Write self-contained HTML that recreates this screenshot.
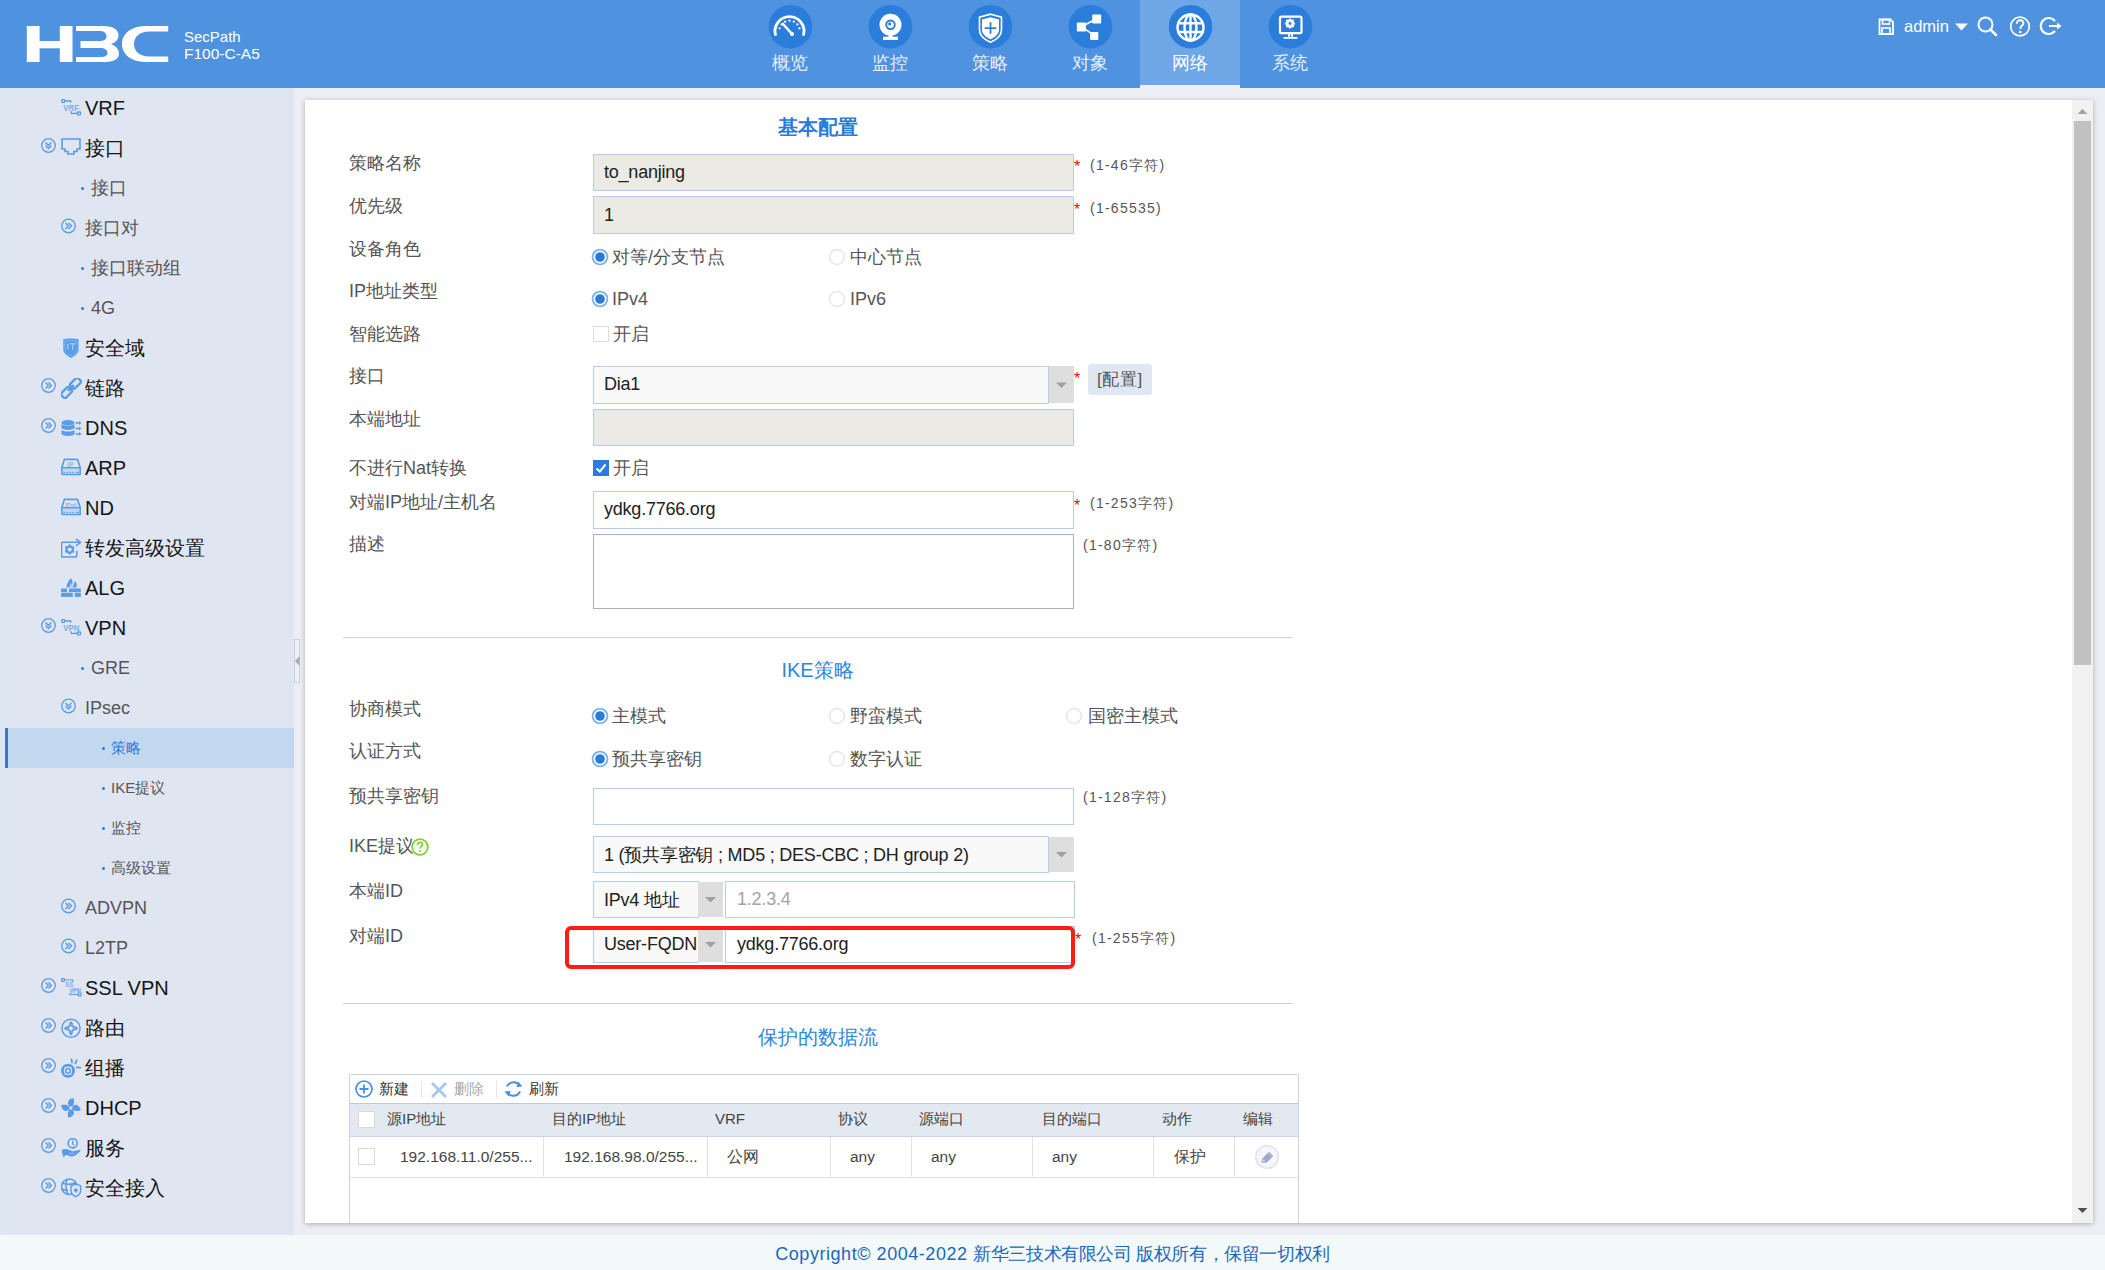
<!DOCTYPE html><html><head><meta charset="utf-8"><style>
html,body{margin:0;padding:0}
body{width:2105px;height:1270px;overflow:hidden;position:relative;background:#eceef3;font-family:'Liberation Sans',sans-serif}
.t{position:absolute;white-space:nowrap}
.r{position:absolute;box-sizing:border-box}
</style></head><body>
<div class="r" style="left:0px;top:0px;width:2105px;height:88px;background:#4f92df"></div>
<div class="r" style="left:1140px;top:0px;width:100px;height:85px;background:#6fa7e6"></div>
<div class="r" style="left:1140px;top:85px;width:100px;height:3px;background:#eaf2fd"></div>
<svg class="r" style="left:20px;top:20px;" width="160" height="50" viewBox="0 0 160 50"><g fill="#fff" transform="translate(-20,-20)">
<rect x="26.8" y="26" width="12.8" height="36"/><rect x="59.8" y="26" width="12.7" height="36"/><rect x="39" y="41" width="21.5" height="7.3"/>
<path d="M76,26 L103,26 C114,26 118.5,30 118.5,35.5 C118.5,39.5 115.5,42.5 111,44.3 C116,46 119,49.5 119,53.5 C119,59.5 113.5,62 103,62 L76,62 L76,57 L100,57 C105.5,57 107.5,55.5 107.5,53 C107.5,50 105,48 100,48 L80.5,48 L80.5,41 L99,41 C104,41 106.5,39.5 106.5,36.5 C106.5,33 104,31 99,31 L76,31 Z"/>
<path d="M168.2,26 L147,26 C131,26 122,33.5 122,44 C122,54.5 131,62 147,62 L168.2,62 L168.2,56.5 L149,56.5 C140,56.5 134,51.5 134,44 C134,36.5 140,31.5 149,31.5 L168.2,31.5 Z"/>
</g></svg>
<div class="t" style="left:184px;top:29px;font-size:15px;line-height:15px;color:#fff;font-weight:normal;">SecPath</div>
<div class="t" style="left:184px;top:45.5px;font-size:15.5px;line-height:15px;color:#fff;font-weight:normal;">F100-C-A5</div>
<svg class="r" style="left:740px;top:0px;" width="100" height="52" viewBox="0 0 100 52"><circle cx="50.5" cy="26.7" r="21.8" fill="#2a7ddb"/><g transform="translate(50.5,26.7)"><g transform="translate(-1,4.3)"><path d="M-13.8,4.6 A14.5,14.5 0 1 1 13.8,4.6" fill="none" stroke="#fff" stroke-width="2.8"/>
<g fill="#fff"><circle cx="-9.95" cy="-2.67" r="1.15"/><circle cx="-7.89" cy="-6.62" r="1.15"/><circle cx="-4.35" cy="-9.33" r="1.15"/><circle cx="0.00" cy="-10.30" r="1.15"/><circle cx="4.35" cy="-9.33" r="1.15"/><circle cx="7.89" cy="-6.62" r="1.15"/><circle cx="9.95" cy="-2.67" r="1.15"/></g>
<path d="M-6.5,-7 L2.5,3" stroke="#fff" stroke-width="2.6" stroke-linecap="round"/><circle cx="2.5" cy="3" r="2" fill="#fff"/></g></g></svg>
<div class="t" style="left:740px;top:53px;font-size:18px;line-height:20px;color:#e3eefb;font-weight:normal;"><div style="width:100px;text-align:center">概览</div></div>
<svg class="r" style="left:840px;top:0px;" width="100" height="52" viewBox="0 0 100 52"><circle cx="50.5" cy="26.7" r="21.8" fill="#2a7ddb"/><g transform="translate(50.5,26.7)"><circle cx="0" cy="-2" r="11" fill="#fff"/><circle cx="0" cy="-2" r="5.2" fill="#2a7ddb"/><circle cx="0" cy="-2" r="3.3" fill="#fff"/><circle cx="-0.8" cy="-2.8" r="1.6" fill="#2a7ddb"/>
<rect x="-2" y="8" width="4" height="4" fill="#fff"/><rect x="-7.5" y="10" width="15" height="3.2" fill="#fff"/></g></svg>
<div class="t" style="left:840px;top:53px;font-size:18px;line-height:20px;color:#e3eefb;font-weight:normal;"><div style="width:100px;text-align:center">监控</div></div>
<svg class="r" style="left:940px;top:0px;" width="100" height="52" viewBox="0 0 100 52"><circle cx="50.5" cy="26.7" r="21.8" fill="#2a7ddb"/><g transform="translate(50.5,26.7)"><path d="M0,-12.5 L11,-9.5 L11,3 C11,9 6,13 0,15.5 C-6,13 -11,9 -11,3 L-11,-9.5 Z" fill="none" stroke="#fff" stroke-width="1.6"/>
<path d="M0,-9.5 L8.5,-7.3 L8.5,2.8 C8.5,7.5 4.5,10.5 0,12.5 C-4.5,10.5 -8.5,7.5 -8.5,2.8 L-8.5,-7.3 Z" fill="#fff"/>
<path d="M0,-4.5 V7 M-5.8,1.5 H5.8" stroke="#2a7ddb" stroke-width="1.8"/></g></svg>
<div class="t" style="left:940px;top:53px;font-size:18px;line-height:20px;color:#e3eefb;font-weight:normal;"><div style="width:100px;text-align:center">策略</div></div>
<svg class="r" style="left:1040px;top:0px;" width="100" height="52" viewBox="0 0 100 52"><circle cx="50.5" cy="26.7" r="21.8" fill="#2a7ddb"/><g transform="translate(50.5,26.7)"><path d="M-9,0 L6,-8 M-9,0 L4,9" stroke="#fff" stroke-width="1.6"/>
<rect x="1.7" y="-12.2" width="9" height="9" rx="1" fill="#fff"/><rect x="-13.7" y="-4.2" width="9.2" height="9" rx="1" fill="#fff"/><rect x="-0.4" y="5.2" width="8.2" height="8" rx="1" fill="#fff"/></g></svg>
<div class="t" style="left:1040px;top:53px;font-size:18px;line-height:20px;color:#e3eefb;font-weight:normal;"><div style="width:100px;text-align:center">对象</div></div>
<svg class="r" style="left:1140px;top:0px;" width="100" height="52" viewBox="0 0 100 52"><circle cx="50.5" cy="26.7" r="21.8" fill="#2a7ddb"/><g transform="translate(50.5,26.7)"><g fill="none" stroke="#fff" stroke-width="2.4"><circle cx="0" cy="0.8" r="13"/><ellipse cx="0" cy="0.8" rx="6" ry="13"/><path d="M-13,-3.5 H13 M-13,5.3 H13 M0,-12.2 V13.8"/></g></g></svg>
<div class="t" style="left:1140px;top:53px;font-size:18px;line-height:20px;color:#ffffff;font-weight:normal;"><div style="width:100px;text-align:center">网络</div></div>
<svg class="r" style="left:1240px;top:0px;" width="100" height="52" viewBox="0 0 100 52"><circle cx="50.5" cy="26.7" r="21.8" fill="#2a7ddb"/><g transform="translate(50.5,26.7)"><rect x="-10.5" y="-10" width="21.5" height="16.5" rx="1.5" fill="none" stroke="#fff" stroke-width="2.2"/>
<path d="M-1.5,6.5 V10 M1.5,6.5 V10" stroke="#fff" stroke-width="2"/><rect x="-7" y="10.3" width="14" height="1.8" fill="#fff"/>
<g transform="translate(-0.5,-3.2)"><circle r="3.2" fill="none" stroke="#fff" stroke-width="2.2"/><g stroke="#fff" stroke-width="1.8"><path d="M0,-5 V5 M-5,0 H5 M-3.6,-3.6 L3.6,3.6 M-3.6,3.6 L3.6,-3.6"/></g><circle r="1.4" fill="#2a7ddb"/></g></g></svg>
<div class="t" style="left:1240px;top:53px;font-size:18px;line-height:20px;color:#e3eefb;font-weight:normal;"><div style="width:100px;text-align:center">系统</div></div>
<svg class="r" style="left:1876px;top:16px;" width="20" height="21" viewBox="0 0 20 21"><path d="M3.5,3.5 H14.5 L17,6 V18 H3.5 Z" fill="none" stroke="#fff" stroke-width="1.8"/><rect x="6.5" y="3.5" width="7" height="4.5" fill="none" stroke="#fff" stroke-width="1.6"/><rect x="6" y="12" width="8" height="6" fill="none" stroke="#fff" stroke-width="1.6"/></svg>
<div class="t" style="left:1904px;top:17px;font-size:16.5px;line-height:18px;color:#fff;font-weight:normal;">admin</div>
<svg class="r" style="left:1954px;top:22px;" width="16" height="10" viewBox="0 0 16 10"><path d="M1,1.5 H14 L7.5,8.5 Z" fill="#fff"/></svg>
<svg class="r" style="left:1975px;top:14px;" width="26" height="24" viewBox="0 0 26 24"><circle cx="10.5" cy="10.5" r="7" fill="none" stroke="#fff" stroke-width="2"/><path d="M15.5,15.5 L21,21" stroke="#fff" stroke-width="2.6" stroke-linecap="round"/></svg>
<svg class="r" style="left:2008px;top:14px;" width="26" height="26" viewBox="0 0 26 26"><circle cx="12" cy="12.5" r="9.3" fill="none" stroke="#fff" stroke-width="1.7"/><path d="M8.8,9.8 C8.8,7.4 10.3,6.2 12.1,6.2 C14,6.2 15.4,7.5 15.4,9.3 C15.4,11.6 12.4,12 12.4,14.3 V15" fill="none" stroke="#fff" stroke-width="1.9"/><circle cx="12.3" cy="18" r="1.3" fill="#fff"/></svg>
<svg class="r" style="left:2038px;top:14px;" width="28" height="24" viewBox="0 0 28 24"><path d="M17,7 A8,8 0 1 0 17,17" fill="none" stroke="#fff" stroke-width="2.2"/><path d="M11,12 H20" stroke="#fff" stroke-width="2"/><path d="M19,8.5 L23.5,12 L19,15.5 Z" fill="#fff"/></svg>
<div class="r" style="left:0px;top:88px;width:294px;height:1147px;background:#dfe5f1"></div>
<div class="r" style="left:0px;top:88px;width:5px;height:1147px;background:#dde7f5"></div>
<div class="r" style="left:5px;top:728px;width:289px;height:40px;background:#c2d8ef"></div>
<div class="r" style="left:5px;top:728px;width:3px;height:40px;background:#2a7bdc"></div>
<div class="r" style="left:294px;top:639px;width:6px;height:44px;border:1px solid #c9d1ea;background:#eef0f5"></div>
<svg class="r" style="left:294px;top:654px;" width="6" height="14" viewBox="0 0 6 14"><path d="M5.5,2 L1,7 L5.5,12 Z" fill="#a8a8ac"/></svg>
<svg class="r" style="left:61px;top:98px;" width="21" height="21" viewBox="0 0 21 21"><g fill="none" stroke="#5a9be6" stroke-width="1.3"><rect x="0.7" y="1.7" width="2.9" height="2.7" rx="0.6"/><path d="M3.6,3 H9.7 V4.8"/><rect x="16.5" y="14" width="3" height="2.8" rx="0.6"/><path d="M10.3,13.2 V15.4 H16.5"/></g><text x="2.3" y="12.6" font-size="8.6" font-family="Liberation Sans" font-weight="bold" fill="#7eaee9" textLength="15.6" lengthAdjust="spacingAndGlyphs">VRF</text></svg>
<div class="t" style="left:85px;top:88px;font-size:20px;line-height:40px;color:#151515;font-weight:normal;">VRF</div>
<svg class="r" style="left:40px;top:136px;" width="18" height="18" viewBox="0 0 18 18"><circle cx="8.5" cy="9.5" r="6.8" fill="none" stroke="#5a9be6" stroke-width="1.3"/><path d="M5.5,6.5 L8.5,9.5 L11.5,6.5 M5.5,9.5 L8.5,12.5 L11.5,9.5" fill="none" stroke="#5a9be6" stroke-width="1.4"/></svg>
<svg class="r" style="left:61px;top:138px;" width="21" height="21" viewBox="0 0 21 21"><path d="M1,1 H19 V11 H16 V13.5 H13 V16 H7 V13.5 H4 V11 H1 Z" fill="none" stroke="#5a9be6" stroke-width="1.6"/></svg>
<div class="t" style="left:85px;top:128px;font-size:20px;line-height:40px;color:#151515;font-weight:normal;">接口</div>
<div class="r" style="left:81px;top:186.5px;width:3px;height:3px;background:#2a7ad8;border-radius:50%"></div>
<div class="t" style="left:91px;top:168px;font-size:18px;line-height:40px;color:#555;font-weight:normal;">接口</div>
<svg class="r" style="left:60px;top:216px;" width="18" height="18" viewBox="0 0 18 18"><circle cx="8.5" cy="10" r="6.8" fill="none" stroke="#5a9be6" stroke-width="1.3"/><path d="M5.5,7 L8.5,10 L5.5,13 M8.5,7 L11.5,10 L8.5,13" fill="none" stroke="#5a9be6" stroke-width="1.4"/></svg>
<div class="t" style="left:85px;top:208px;font-size:18px;line-height:40px;color:#555;font-weight:normal;">接口对</div>
<div class="r" style="left:81px;top:266.5px;width:3px;height:3px;background:#2a7ad8;border-radius:50%"></div>
<div class="t" style="left:91px;top:248px;font-size:18px;line-height:40px;color:#555;font-weight:normal;">接口联动组</div>
<div class="r" style="left:81px;top:306.5px;width:3px;height:3px;background:#2a7ad8;border-radius:50%"></div>
<div class="t" style="left:91px;top:288px;font-size:18px;line-height:40px;color:#555;font-weight:normal;">4G</div>
<svg class="r" style="left:61px;top:338px;" width="21" height="21" viewBox="0 0 21 21"><path d="M2.3,1.3 C6,0.1 13.6,0.1 17.6,1.3 V11.6 C17.6,15.4 13.5,18.3 10,19.9 C6.5,18.3 2.3,15.4 2.3,11.6 Z" fill="#5a9be6"/><path d="M4,3 C7,2.2 13,2.2 16,3 V11.4 C16,14.3 12.8,16.7 10,18 C7.2,16.7 4,14.3 4,11.4 Z" fill="none" stroke="#8fbcf0" stroke-width="0.7"/><path d="M6.8,5.5 V11.5 M9,5.8 H14.5 M11.7,5.8 V12" stroke="#9cc6f2" stroke-width="1.4"/></svg>
<div class="t" style="left:85px;top:328px;font-size:20px;line-height:40px;color:#151515;font-weight:normal;">安全域</div>
<svg class="r" style="left:40px;top:376px;" width="18" height="18" viewBox="0 0 18 18"><circle cx="8.5" cy="9.5" r="6.8" fill="none" stroke="#5a9be6" stroke-width="1.3"/><path d="M5.5,6.5 L8.5,9.5 L5.5,12.5 M8.5,6.5 L11.5,9.5 L8.5,12.5" fill="none" stroke="#5a9be6" stroke-width="1.4"/></svg>
<svg class="r" style="left:61px;top:378px;" width="21" height="21" viewBox="0 0 21 21"><g fill="none" stroke="#5a9be6" stroke-width="2.3"><rect x="9" y="2" width="11" height="6.5" rx="1.8" transform="rotate(-45 14.5 5.3)"/><rect x="0" y="11.3" width="11" height="6.5" rx="1.8" transform="rotate(-45 5.5 14.5)"/></g><path d="M7.2,12.8 L12.8,7.2" stroke="#5a9be6" stroke-width="2.6"/></svg>
<div class="t" style="left:85px;top:368px;font-size:20px;line-height:40px;color:#151515;font-weight:normal;">链路</div>
<svg class="r" style="left:40px;top:416px;" width="18" height="18" viewBox="0 0 18 18"><circle cx="8.5" cy="9.5" r="6.8" fill="none" stroke="#5a9be6" stroke-width="1.3"/><path d="M5.5,6.5 L8.5,9.5 L5.5,12.5 M8.5,6.5 L11.5,9.5 L8.5,12.5" fill="none" stroke="#5a9be6" stroke-width="1.4"/></svg>
<svg class="r" style="left:61px;top:418px;" width="21" height="21" viewBox="0 0 21 21"><g transform="translate(0,1.5)"><g fill="#5a9be6"><ellipse cx="7" cy="3.2" rx="6.5" ry="2.8"/><path d="M0.5,4.6 C1.5,7 12.5,7 13.5,4.6 V8.6 C12.5,11 1.5,11 0.5,8.6 Z"/><path d="M0.5,10.2 C1.5,12.6 12.5,12.6 13.5,10.2 V14.2 C12.5,17.2 1.5,17.2 0.5,14.2 Z"/></g><g stroke="#5a9be6" stroke-width="1.3"><path d="M14.5,3.5 H19 M14.5,9 H19 M14.5,14.5 H19"/></g><g fill="#5a9be6"><path d="M18,1.5 L20.5,3.5 L18,5.5 Z M18,7 L20.5,9 L18,11 Z M18,12.5 L20.5,14.5 L18,16.5 Z"/></g></g></svg>
<div class="t" style="left:85px;top:408px;font-size:20px;line-height:40px;color:#151515;font-weight:normal;">DNS</div>
<svg class="r" style="left:61px;top:458px;" width="21" height="21" viewBox="0 0 21 21"><path d="M3.4,1.6 H16.4 L19.2,9.7 V16.6 H0.9 V9.7 Z" fill="#c3d6f1" stroke="#5a9be6" stroke-width="1.5" stroke-linejoin="round"/><path d="M3.4,1.6 H16.4 L19.2,9.7 H0.9 Z" fill="#dfe5f1" stroke="#5a9be6" stroke-width="1.5" stroke-linejoin="round"/><path d="M2.5,14.4 H14" stroke="#5a9be6" stroke-width="1" stroke-dasharray="1.6 1.2"/><path d="M15.5,14.4 H18" stroke="#5a9be6" stroke-width="1.2"/><text x="6.3" y="9" font-size="7" font-family="Liberation Sans" font-weight="bold" fill="#8fb5ea">IP</text></svg>
<div class="t" style="left:85px;top:448px;font-size:20px;line-height:40px;color:#151515;font-weight:normal;">ARP</div>
<svg class="r" style="left:61px;top:498px;" width="21" height="21" viewBox="0 0 21 21"><path d="M3.4,1.6 H16.4 L19.2,9.7 V16.6 H0.9 V9.7 Z" fill="#c3d6f1" stroke="#5a9be6" stroke-width="1.5" stroke-linejoin="round"/><path d="M3.4,1.6 H16.4 L19.2,9.7 H0.9 Z" fill="#dfe5f1" stroke="#5a9be6" stroke-width="1.5" stroke-linejoin="round"/><path d="M2.5,14.4 H14" stroke="#5a9be6" stroke-width="1" stroke-dasharray="1.6 1.2"/><path d="M15.5,14.4 H18" stroke="#5a9be6" stroke-width="1.2"/><text x="4.3" y="8.8" font-size="6" font-family="Liberation Sans" font-weight="bold" fill="#8fb5ea" textLength="11.5">IPv6</text></svg>
<div class="t" style="left:85px;top:488px;font-size:20px;line-height:40px;color:#151515;font-weight:normal;">ND</div>
<svg class="r" style="left:61px;top:538px;" width="21" height="21" viewBox="0 0 21 21"><path d="M15.8,12.8 V17.6 Q15.8,19 14.4,19 H1.9 Q0.5,19 0.5,17.6 V5.6 Q0.5,4.2 1.9,4.2 H18.5" fill="none" stroke="#5a9be6" stroke-width="1.6"/><path d="M15,0.8 L19.5,4.3 L15,8" fill="none" stroke="#5a9be6" stroke-width="1.6" stroke-linejoin="round"/><path d="M8.70,5.90 L10.70,8.04 L13.55,8.70 L12.70,11.50 L13.55,14.30 L10.70,14.96 L8.70,17.10 L6.70,14.96 L3.85,14.30 L4.70,11.50 L3.85,8.70 L6.70,8.04 Z" fill="#5a9be6"/><circle cx="8.7" cy="11.5" r="2" fill="#dfe5f1"/></svg>
<div class="t" style="left:85px;top:528px;font-size:20px;line-height:40px;color:#151515;font-weight:normal;">转发高级设置</div>
<svg class="r" style="left:61px;top:578px;" width="21" height="21" viewBox="0 0 21 21"><path d="M9.6,0.2 C12.2,2.5 11.8,6 10.2,9.6 H5.6 C5.2,6.5 6.8,4 9.6,0.2 Z" fill="#5a9be6"/><path d="M13.8,2.8 C15.8,5 16.5,7.6 15.2,9.6 H11.2 C12.6,7 13.6,5 13.8,2.8 Z" fill="#5a9be6"/><path d="M9.8,4.5 L8.2,9.6 H11.6 Z" fill="#dfe5f1" opacity="0.7"/><g fill="#5a9be6"><rect x="0.1" y="10.5" width="5.8" height="3.6"/><rect x="8" y="10.5" width="11.8" height="3.6"/><rect x="0.1" y="14.8" width="11.7" height="4.1"/><rect x="13.8" y="14.8" width="6" height="4.1"/></g></svg>
<div class="t" style="left:85px;top:568px;font-size:20px;line-height:40px;color:#151515;font-weight:normal;">ALG</div>
<svg class="r" style="left:40px;top:616px;" width="18" height="18" viewBox="0 0 18 18"><circle cx="8.5" cy="9.5" r="6.8" fill="none" stroke="#5a9be6" stroke-width="1.3"/><path d="M5.5,6.5 L8.5,9.5 L11.5,6.5 M5.5,9.5 L8.5,12.5 L11.5,9.5" fill="none" stroke="#5a9be6" stroke-width="1.4"/></svg>
<svg class="r" style="left:61px;top:618px;" width="21" height="21" viewBox="0 0 21 21"><g fill="none" stroke="#5a9be6" stroke-width="1.3"><rect x="0.7" y="1.7" width="2.9" height="2.7" rx="0.6"/><path d="M3.6,3 H9.7 V4.8"/><rect x="16.5" y="14" width="3" height="2.8" rx="0.6"/><path d="M10.3,13.2 V15.4 H16.5"/></g><text x="2.2" y="12.6" font-size="8.6" font-family="Liberation Sans" font-weight="bold" fill="#7eaee9" textLength="16.4" lengthAdjust="spacingAndGlyphs">VPN</text></svg>
<div class="t" style="left:85px;top:608px;font-size:20px;line-height:40px;color:#151515;font-weight:normal;">VPN</div>
<div class="r" style="left:81px;top:666.5px;width:3px;height:3px;background:#2a7ad8;border-radius:50%"></div>
<div class="t" style="left:91px;top:648px;font-size:18px;line-height:40px;color:#555;font-weight:normal;">GRE</div>
<svg class="r" style="left:60px;top:696px;" width="18" height="18" viewBox="0 0 18 18"><circle cx="8.5" cy="10" r="6.8" fill="none" stroke="#5a9be6" stroke-width="1.3"/><path d="M5.5,7 L8.5,10 L11.5,7 M5.5,10 L8.5,13 L11.5,10" fill="none" stroke="#5a9be6" stroke-width="1.4"/></svg>
<div class="t" style="left:85px;top:688px;font-size:18px;line-height:40px;color:#555;font-weight:normal;">IPsec</div>
<div class="r" style="left:101.5px;top:746.5px;width:3px;height:3px;background:#2a7ad8;border-radius:50%"></div>
<div class="t" style="left:111px;top:728px;font-size:15px;line-height:40px;color:#2a7ad8;font-weight:normal;">策略</div>
<div class="r" style="left:101.5px;top:786.5px;width:3px;height:3px;background:#2a7ad8;border-radius:50%"></div>
<div class="t" style="left:111px;top:768px;font-size:15px;line-height:40px;color:#555;font-weight:normal;">IKE提议</div>
<div class="r" style="left:101.5px;top:826.5px;width:3px;height:3px;background:#2a7ad8;border-radius:50%"></div>
<div class="t" style="left:111px;top:808px;font-size:15px;line-height:40px;color:#555;font-weight:normal;">监控</div>
<div class="r" style="left:101.5px;top:866.5px;width:3px;height:3px;background:#2a7ad8;border-radius:50%"></div>
<div class="t" style="left:111px;top:848px;font-size:15px;line-height:40px;color:#555;font-weight:normal;">高级设置</div>
<svg class="r" style="left:60px;top:896px;" width="18" height="18" viewBox="0 0 18 18"><circle cx="8.5" cy="10" r="6.8" fill="none" stroke="#5a9be6" stroke-width="1.3"/><path d="M5.5,7 L8.5,10 L5.5,13 M8.5,7 L11.5,10 L8.5,13" fill="none" stroke="#5a9be6" stroke-width="1.4"/></svg>
<div class="t" style="left:85px;top:888px;font-size:18px;line-height:40px;color:#555;font-weight:normal;">ADVPN</div>
<svg class="r" style="left:60px;top:936px;" width="18" height="18" viewBox="0 0 18 18"><circle cx="8.5" cy="10" r="6.8" fill="none" stroke="#5a9be6" stroke-width="1.3"/><path d="M5.5,7 L8.5,10 L5.5,13 M8.5,7 L11.5,10 L8.5,13" fill="none" stroke="#5a9be6" stroke-width="1.4"/></svg>
<div class="t" style="left:85px;top:928px;font-size:18px;line-height:40px;color:#555;font-weight:normal;">L2TP</div>
<svg class="r" style="left:40px;top:976px;" width="18" height="18" viewBox="0 0 18 18"><circle cx="8.5" cy="9.5" r="6.8" fill="none" stroke="#5a9be6" stroke-width="1.3"/><path d="M5.5,6.5 L8.5,9.5 L5.5,12.5 M8.5,6.5 L11.5,9.5 L8.5,12.5" fill="none" stroke="#5a9be6" stroke-width="1.4"/></svg>
<svg class="r" style="left:61px;top:978px;" width="21" height="21" viewBox="0 0 21 21"><g fill="none" stroke="#5a9be6" stroke-width="1.2"><rect x="0.6" y="0.6" width="2.8" height="2.8" rx="0.6"/><path d="M3.4,2 H11.8 V4"/><rect x="17.3" y="15" width="2.8" height="2.8" rx="0.6"/><path d="M8.8,15 V16.5 H17.3"/></g><text x="4.2" y="9" font-size="7.5" font-family="Liberation Sans" font-weight="bold" fill="#80afe9" textLength="8" lengthAdjust="spacingAndGlyphs">SS</text><text x="8.4" y="14.6" font-size="7" font-family="Liberation Sans" font-weight="bold" fill="#6fa5e8" textLength="11.5" lengthAdjust="spacingAndGlyphs">VPN</text></svg>
<div class="t" style="left:85px;top:968px;font-size:20px;line-height:40px;color:#151515;font-weight:normal;">SSL VPN</div>
<svg class="r" style="left:40px;top:1016px;" width="18" height="18" viewBox="0 0 18 18"><circle cx="8.5" cy="9.5" r="6.8" fill="none" stroke="#5a9be6" stroke-width="1.3"/><path d="M5.5,6.5 L8.5,9.5 L5.5,12.5 M8.5,6.5 L11.5,9.5 L8.5,12.5" fill="none" stroke="#5a9be6" stroke-width="1.4"/></svg>
<svg class="r" style="left:61px;top:1018px;" width="21" height="21" viewBox="0 0 21 21"><circle cx="10" cy="10.3" r="9.1" fill="none" stroke="#5a9be6" stroke-width="1.4"/><path d="M10,2.9 L12.4,6.2 H7.6 Z M10,17.7 L12.4,14.4 H7.6 Z M2.6,10.3 L5.9,7.9 V12.7 Z M17.4,10.3 L14.1,7.9 V12.7 Z" fill="#5a9be6"/><rect x="7.2" y="7.5" width="5.6" height="5.6" transform="rotate(45 10 10.3)" fill="none" stroke="#5a9be6" stroke-width="1.9"/><path d="M10,6 V7 M10,13.6 V14.6 M5.7,10.3 H6.7 M13.3,10.3 H14.3" stroke="#8fb9ee" stroke-width="1.2"/></svg>
<div class="t" style="left:85px;top:1008px;font-size:20px;line-height:40px;color:#151515;font-weight:normal;">路由</div>
<svg class="r" style="left:40px;top:1056px;" width="18" height="18" viewBox="0 0 18 18"><circle cx="8.5" cy="9.5" r="6.8" fill="none" stroke="#5a9be6" stroke-width="1.3"/><path d="M5.5,6.5 L8.5,9.5 L5.5,12.5 M8.5,6.5 L11.5,9.5 L8.5,12.5" fill="none" stroke="#5a9be6" stroke-width="1.4"/></svg>
<svg class="r" style="left:61px;top:1058px;" width="21" height="21" viewBox="0 0 21 21"><circle cx="7" cy="12.8" r="5.6" fill="none" stroke="#5a9be6" stroke-width="2.8"/><circle cx="7" cy="12.8" r="2.4" fill="none" stroke="#5a9be6" stroke-width="1.5"/><g fill="#dfe5f1"><circle cx="4.3" cy="9.8" r="0.9"/><circle cx="9.7" cy="9.8" r="0.9"/><circle cx="4.3" cy="15.8" r="0.9"/><circle cx="9.7" cy="15.8" r="0.9"/></g><path d="M10.5,1.5 L11,4.5 M15.6,2.3 L14.3,5.5 M15.8,9.3 L19.3,9.6" stroke="#5a9be6" stroke-width="1.8" stroke-linecap="round"/></svg>
<div class="t" style="left:85px;top:1048px;font-size:20px;line-height:40px;color:#151515;font-weight:normal;">组播</div>
<svg class="r" style="left:40px;top:1096px;" width="18" height="18" viewBox="0 0 18 18"><circle cx="8.5" cy="9.5" r="6.8" fill="none" stroke="#5a9be6" stroke-width="1.3"/><path d="M5.5,6.5 L8.5,9.5 L5.5,12.5 M8.5,6.5 L11.5,9.5 L8.5,12.5" fill="none" stroke="#5a9be6" stroke-width="1.4"/></svg>
<svg class="r" style="left:61px;top:1098px;" width="21" height="21" viewBox="0 0 21 21"><g transform="translate(9.9,9.9)" fill="#5a9be6"><path d="M-1.2,-1.8 C-4.8,-4 -3,-9 2.7,-9.8 C3.6,-6.5 2.8,-3 1.5,-1 Z"/><path transform="rotate(90)" d="M-1.2,-1.8 C-4.8,-4 -3,-9 2.7,-9.8 C3.6,-6.5 2.8,-3 1.5,-1 Z"/><path transform="rotate(180)" d="M-1.2,-1.8 C-4.8,-4 -3,-9 2.7,-9.8 C3.6,-6.5 2.8,-3 1.5,-1 Z"/><path transform="rotate(270)" d="M-1.2,-1.8 C-4.8,-4 -3,-9 2.7,-9.8 C3.6,-6.5 2.8,-3 1.5,-1 Z"/></g></svg>
<div class="t" style="left:85px;top:1088px;font-size:20px;line-height:40px;color:#151515;font-weight:normal;">DHCP</div>
<svg class="r" style="left:40px;top:1136px;" width="18" height="18" viewBox="0 0 18 18"><circle cx="8.5" cy="9.5" r="6.8" fill="none" stroke="#5a9be6" stroke-width="1.3"/><path d="M5.5,6.5 L8.5,9.5 L5.5,12.5 M8.5,6.5 L11.5,9.5 L8.5,12.5" fill="none" stroke="#5a9be6" stroke-width="1.4"/></svg>
<svg class="r" style="left:61px;top:1138px;" width="21" height="21" viewBox="0 0 21 21"><circle cx="11.7" cy="5.3" r="4.6" fill="none" stroke="#5a9be6" stroke-width="1.6"/><path d="M11.6,2.6 V5.8 L13.4,7.4" fill="none" stroke="#5a9be6" stroke-width="1.2"/><path d="M0.6,12.2 C3,10.5 6,10.5 9,12.2 C10.5,13.2 12,13.4 13.5,13 L19.9,11.6 C19,14.5 16,16.5 13,18 C11,19 9,18.5 7,17.5 C5.5,16.8 4.5,17 3.5,18.5 L2,18.8 Z" fill="#5a9be6"/><path d="M8,15.3 H13" stroke="#a9c8f0" stroke-width="0.8"/></svg>
<div class="t" style="left:85px;top:1128px;font-size:20px;line-height:40px;color:#151515;font-weight:normal;">服务</div>
<svg class="r" style="left:40px;top:1176px;" width="18" height="18" viewBox="0 0 18 18"><circle cx="8.5" cy="9.5" r="6.8" fill="none" stroke="#5a9be6" stroke-width="1.3"/><path d="M5.5,6.5 L8.5,9.5 L5.5,12.5 M8.5,6.5 L11.5,9.5 L8.5,12.5" fill="none" stroke="#5a9be6" stroke-width="1.4"/></svg>
<svg class="r" style="left:61px;top:1178px;" width="21" height="21" viewBox="0 0 21 21"><g fill="none" stroke="#5a9be6" stroke-width="1.5"><circle cx="8.3" cy="8.7" r="7.8"/><path d="M6.3,1.2 C4.3,5 4.3,12 7,16.2"/><path d="M1.5,5 C5,6.5 11,6.5 15.5,4.5"/><path d="M1.2,11 C3,12 5,12.3 7,12"/></g><path d="M14.8,6.2 L19.6,7.8 V12.7 C19.6,15.5 17.3,17.5 14.8,18.7 C12.3,17.5 10,15.5 10,12.7 V7.8 Z" fill="#dfe5f1" stroke="#5a9be6" stroke-width="1.4"/><path d="M14.8,10.2 V14.4 M12.7,12.3 H16.9" stroke="#5a9be6" stroke-width="1.8"/></svg>
<div class="t" style="left:85px;top:1168px;font-size:20px;line-height:40px;color:#151515;font-weight:normal;">安全接入</div>
<div class="r" style="left:0px;top:1235px;width:2105px;height:35px;background:#f3f8f8"></div>
<div class="t" style="left:0px;top:1243px;font-size:18px;line-height:22px;color:#1a68bd;font-weight:normal;"><div style="width:2105px;text-align:center;padding-left:0px"><span style="letter-spacing:0.55px">Copyright© 2004-2022 </span><span style="letter-spacing:-0.4px">新华三技术有限公司 版权所有，保留一切权利</span></div></div>
<div class="r" style="left:305px;top:100px;width:1788px;height:1123px;background:#fff;box-shadow:0 1px 5px rgba(0,0,0,.28)"></div>
<div class="r" style="left:2072px;top:100px;width:21px;height:1123px;background:#f1f1f1"></div>
<div class="r" style="left:2074px;top:121px;width:17px;height:544px;background:#c1c1c1"></div>
<svg class="r" style="left:2072px;top:104px;" width="21" height="14" viewBox="0 0 21 14"><path d="M5.5,10 L10.5,5 L15.5,10 Z" fill="#a3a3a3"/></svg>
<svg class="r" style="left:2072px;top:1203px;" width="21" height="14" viewBox="0 0 21 14"><path d="M5.5,5 L15.5,5 L10.5,10 Z" fill="#505050"/></svg>
<div class="t" style="left:305px;top:116px;font-size:20px;line-height:22px;color:#2a7ad8;font-weight:bold;"><div style="width:1025px;text-align:center">基本配置</div></div>
<div class="t" style="left:349px;top:153px;font-size:18px;line-height:20px;color:#555;font-weight:normal;">策略名称</div>
<div class="r" style="left:593px;top:154px;width:481px;height:37px;background:#ebeae4;border:1px solid #b9cbe5"></div>
<div class="t" style="left:604px;top:162px;font-size:18px;line-height:20px;color:#222;font-weight:normal;letter-spacing:-0.22px">to_nanjing</div>
<div class="t" style="left:1074px;top:158.5px;font-size:16px;line-height:16px;color:#f00;font-weight:normal;">*</div>
<div class="t" style="left:1090px;top:157px;font-size:14px;line-height:16px;color:#555;font-weight:normal;letter-spacing:1.25px">(1-46字符)</div>
<div class="t" style="left:349px;top:196px;font-size:18px;line-height:20px;color:#555;font-weight:normal;">优先级</div>
<div class="r" style="left:593px;top:196px;width:481px;height:38px;background:#ebeae4;border:1px solid #b9cbe5"></div>
<div class="t" style="left:604px;top:205px;font-size:18px;line-height:20px;color:#222;font-weight:normal;letter-spacing:-0.22px">1</div>
<div class="t" style="left:1074px;top:201.5px;font-size:16px;line-height:16px;color:#f00;font-weight:normal;">*</div>
<div class="t" style="left:1090px;top:200px;font-size:14px;line-height:16px;color:#555;font-weight:normal;letter-spacing:1.25px">(1-65535)</div>
<div class="t" style="left:349px;top:239px;font-size:18px;line-height:20px;color:#555;font-weight:normal;">设备角色</div>
<svg class="r" style="left:590.5px;top:248px;" width="18" height="18" viewBox="0 0 18 18"><circle cx="9" cy="9" r="7.4" fill="#fff" stroke="#80b3ee" stroke-width="1.9"/><circle cx="9" cy="9" r="4.8" fill="#2a7ad8"/></svg>
<div class="t" style="left:612px;top:247px;font-size:18px;line-height:20px;color:#555;font-weight:normal;">对等/分支节点</div>
<svg class="r" style="left:827.5px;top:248px;" width="18" height="18" viewBox="0 0 18 18"><circle cx="9" cy="9" r="7.4" fill="#fff" stroke="#e6e6e6" stroke-width="1.5"/></svg>
<div class="t" style="left:850px;top:247px;font-size:18px;line-height:20px;color:#555;font-weight:normal;">中心节点</div>
<div class="t" style="left:349px;top:281px;font-size:18px;line-height:20px;color:#555;font-weight:normal;">IP地址类型</div>
<svg class="r" style="left:590.5px;top:290px;" width="18" height="18" viewBox="0 0 18 18"><circle cx="9" cy="9" r="7.4" fill="#fff" stroke="#80b3ee" stroke-width="1.9"/><circle cx="9" cy="9" r="4.8" fill="#2a7ad8"/></svg>
<div class="t" style="left:612px;top:289px;font-size:18px;line-height:20px;color:#555;font-weight:normal;">IPv4</div>
<svg class="r" style="left:827.5px;top:290px;" width="18" height="18" viewBox="0 0 18 18"><circle cx="9" cy="9" r="7.4" fill="#fff" stroke="#e6e6e6" stroke-width="1.5"/></svg>
<div class="t" style="left:850px;top:289px;font-size:18px;line-height:20px;color:#555;font-weight:normal;">IPv6</div>
<div class="t" style="left:349px;top:324px;font-size:18px;line-height:20px;color:#555;font-weight:normal;">智能选路</div>
<div class="r" style="left:593px;top:326px;width:16px;height:16px;background:#fff;border:1px solid #dcdcdc"></div>
<div class="t" style="left:613px;top:324px;font-size:18px;line-height:20px;color:#555;font-weight:normal;">开启</div>
<div class="t" style="left:349px;top:366px;font-size:18px;line-height:20px;color:#555;font-weight:normal;">接口</div>
<div class="r" style="left:593px;top:366px;width:456px;height:38px;background:#f9f9f9;border:1px solid #b9cbe5"></div>
<div class="r" style="left:1049px;top:367px;width:25px;height:36px;background:#dedede"></div>
<svg class="r" style="left:1049px;top:367px;" width="25" height="36" viewBox="0 0 25 36"><path d="M7.0,15.5 H18.0 L12.5,21.0 Z" fill="#a0a0a0"/></svg>
<div class="r" style="left:1049px;top:366px;width:25px;height:1px;background:#dcdcdc"></div>
<div class="t" style="left:604px;top:374px;font-size:18px;line-height:20px;color:#222;font-weight:normal;letter-spacing:-0.22px">Dia1</div>
<div class="t" style="left:1074px;top:370.5px;font-size:16px;line-height:16px;color:#f00;font-weight:normal;">*</div>
<div class="r" style="left:1088px;top:364px;width:64px;height:31px;background:#dfe7f2;border-radius:3px"></div>
<div class="t" style="left:1097px;top:370px;font-size:17px;line-height:20px;color:#555;font-weight:normal;letter-spacing:0.6px">[配置]</div>
<div class="t" style="left:349px;top:409px;font-size:18px;line-height:20px;color:#555;font-weight:normal;">本端地址</div>
<div class="r" style="left:593px;top:409px;width:481px;height:37px;background:#ebeae4;border:1px solid #b9cbe5"></div>
<div class="t" style="left:349px;top:458px;font-size:18px;line-height:20px;color:#555;font-weight:normal;">不进行Nat转换</div>
<svg class="r" style="left:593px;top:460px;" width="16" height="16" viewBox="0 0 16 16"><rect x="0" y="0" width="16" height="16" fill="#2d7bdc"/><path d="M3.5,8.5 L6.8,11.6 L12.5,4.5" fill="none" stroke="#fff" stroke-width="2"/></svg>
<div class="t" style="left:613px;top:458px;font-size:18px;line-height:20px;color:#555;font-weight:normal;">开启</div>
<div class="t" style="left:349px;top:492px;font-size:18px;line-height:20px;color:#555;font-weight:normal;">对端IP地址/主机名</div>
<div class="r" style="left:593px;top:491px;width:481px;height:38px;background:#fff;border:1px solid #b9cbe5"></div>
<div class="t" style="left:604px;top:499px;font-size:18px;line-height:20px;color:#222;font-weight:normal;letter-spacing:-0.22px">ydkg.7766.org</div>
<div class="t" style="left:1074px;top:497.5px;font-size:16px;line-height:16px;color:#f00;font-weight:normal;">*</div>
<div class="t" style="left:1090px;top:495px;font-size:14px;line-height:16px;color:#555;font-weight:normal;letter-spacing:1.25px">(1-253字符)</div>
<div class="t" style="left:349px;top:534px;font-size:18px;line-height:20px;color:#555;font-weight:normal;">描述</div>
<div class="r" style="left:593px;top:534px;width:481px;height:75px;background:#fff;border:1px solid #a9adc6"></div>
<div class="t" style="left:1083px;top:537px;font-size:14px;line-height:16px;color:#555;font-weight:normal;letter-spacing:1.25px">(1-80字符)</div>
<div class="r" style="left:343px;top:637px;width:950px;height:1px;background:#c9d4e4"></div>
<div class="t" style="left:305px;top:659px;font-size:20px;line-height:22px;color:#3086d9;font-weight:normal;"><div style="width:1025px;text-align:center">IKE策略</div></div>
<div class="t" style="left:349px;top:699px;font-size:18px;line-height:20px;color:#555;font-weight:normal;">协商模式</div>
<svg class="r" style="left:590.5px;top:707px;" width="18" height="18" viewBox="0 0 18 18"><circle cx="9" cy="9" r="7.4" fill="#fff" stroke="#80b3ee" stroke-width="1.9"/><circle cx="9" cy="9" r="4.8" fill="#2a7ad8"/></svg>
<div class="t" style="left:612px;top:706px;font-size:18px;line-height:20px;color:#555;font-weight:normal;">主模式</div>
<svg class="r" style="left:827.5px;top:707px;" width="18" height="18" viewBox="0 0 18 18"><circle cx="9" cy="9" r="7.4" fill="#fff" stroke="#e6e6e6" stroke-width="1.5"/></svg>
<div class="t" style="left:850px;top:706px;font-size:18px;line-height:20px;color:#555;font-weight:normal;">野蛮模式</div>
<svg class="r" style="left:1064.5px;top:707px;" width="18" height="18" viewBox="0 0 18 18"><circle cx="9" cy="9" r="7.4" fill="#fff" stroke="#e6e6e6" stroke-width="1.5"/></svg>
<div class="t" style="left:1088px;top:706px;font-size:18px;line-height:20px;color:#555;font-weight:normal;">国密主模式</div>
<div class="t" style="left:349px;top:741px;font-size:18px;line-height:20px;color:#555;font-weight:normal;">认证方式</div>
<svg class="r" style="left:590.5px;top:750px;" width="18" height="18" viewBox="0 0 18 18"><circle cx="9" cy="9" r="7.4" fill="#fff" stroke="#80b3ee" stroke-width="1.9"/><circle cx="9" cy="9" r="4.8" fill="#2a7ad8"/></svg>
<div class="t" style="left:612px;top:749px;font-size:18px;line-height:20px;color:#555;font-weight:normal;">预共享密钥</div>
<svg class="r" style="left:827.5px;top:750px;" width="18" height="18" viewBox="0 0 18 18"><circle cx="9" cy="9" r="7.4" fill="#fff" stroke="#e6e6e6" stroke-width="1.5"/></svg>
<div class="t" style="left:850px;top:749px;font-size:18px;line-height:20px;color:#555;font-weight:normal;">数字认证</div>
<div class="t" style="left:349px;top:786px;font-size:18px;line-height:20px;color:#555;font-weight:normal;">预共享密钥</div>
<div class="r" style="left:593px;top:788px;width:481px;height:37px;background:#fff;border:1px solid #b9cbe5"></div>
<div class="t" style="left:1083px;top:789px;font-size:14px;line-height:16px;color:#555;font-weight:normal;letter-spacing:1.25px">(1-128字符)</div>
<div class="t" style="left:349px;top:836px;font-size:18px;line-height:20px;color:#555;font-weight:normal;">IKE提议</div>
<svg class="r" style="left:410px;top:837px;" width="20" height="20" viewBox="0 0 20 20"><circle cx="10" cy="10" r="7.8" fill="none" stroke="#84cc3a" stroke-width="1.8"/><path d="M7.4,8 C7.4,6.3 8.6,5.3 10,5.3 C11.5,5.3 12.6,6.3 12.6,7.6 C12.6,9.3 10.3,9.6 10.3,11.4" fill="none" stroke="#84cc3a" stroke-width="1.7"/><circle cx="10.3" cy="14" r="1.1" fill="#84cc3a"/></svg>
<div class="r" style="left:593px;top:836px;width:456px;height:37px;background:#f9f9f9;border:1px solid #b9cbe5"></div>
<div class="r" style="left:1049px;top:837px;width:25px;height:35px;background:#dedede"></div>
<svg class="r" style="left:1049px;top:837px;" width="25" height="35" viewBox="0 0 25 35"><path d="M7.0,15.0 H18.0 L12.5,20.5 Z" fill="#a0a0a0"/></svg>
<div class="t" style="left:604px;top:845px;font-size:18px;line-height:20px;color:#222;font-weight:normal;letter-spacing:-0.22px">1 (预共享密钥 ; MD5 ; DES-CBC ; DH group 2)</div>
<div class="t" style="left:349px;top:881px;font-size:18px;line-height:20px;color:#555;font-weight:normal;">本端ID</div>
<div class="r" style="left:593px;top:881px;width:106px;height:37px;background:#f9f9f9;border:1px solid #b9cbe5"></div>
<div class="r" style="left:698px;top:882px;width:25px;height:35px;background:#dedede"></div>
<svg class="r" style="left:698px;top:882px;" width="25" height="35" viewBox="0 0 25 35"><path d="M7.0,15.0 H18.0 L12.5,20.5 Z" fill="#a0a0a0"/></svg>
<div class="r" style="left:725px;top:881px;width:350px;height:37px;background:#fff;border:1px solid #b9cbe5"></div>
<div class="t" style="left:604px;top:890px;font-size:18px;line-height:20px;color:#222;font-weight:normal;letter-spacing:-0.22px">IPv4 地址</div>
<div class="t" style="left:737px;top:889px;font-size:18px;line-height:20px;color:#a4a4a4;font-weight:normal;letter-spacing:-0.22px">1.2.3.4</div>
<div class="t" style="left:349px;top:926px;font-size:18px;line-height:20px;color:#555;font-weight:normal;">对端ID</div>
<div class="r" style="left:593px;top:926px;width:106px;height:37px;background:#f9f9f9;border:1px solid #b9cbe5"></div>
<div class="r" style="left:698px;top:927px;width:25px;height:35px;background:#dedede"></div>
<svg class="r" style="left:698px;top:927px;" width="25" height="35" viewBox="0 0 25 35"><path d="M7.0,15.0 H18.0 L12.5,20.5 Z" fill="#a0a0a0"/></svg>
<div class="r" style="left:725px;top:926px;width:350px;height:37px;background:#fff;border:1px solid #b9cbe5"></div>
<div class="t" style="left:604px;top:934px;font-size:18px;line-height:20px;color:#222;font-weight:normal;letter-spacing:-0.22px">User-FQDN</div>
<div class="t" style="left:737px;top:934px;font-size:18px;line-height:20px;color:#222;font-weight:normal;letter-spacing:-0.22px">ydkg.7766.org</div>
<div class="t" style="left:1075px;top:931.5px;font-size:16px;line-height:16px;color:#f00;font-weight:normal;">*</div>
<div class="t" style="left:1092px;top:930px;font-size:14px;line-height:16px;color:#555;font-weight:normal;letter-spacing:1.25px">(1-255字符)</div>
<div class="r" style="left:565px;top:926px;width:510px;height:43px;border:4px solid #fe1d15;border-radius:6px"></div>
<div class="r" style="left:343px;top:1003px;width:950px;height:1px;background:#c9d4e4"></div>
<div class="t" style="left:305px;top:1026px;font-size:20px;line-height:22px;color:#3086d9;font-weight:normal;"><div style="width:1025px;text-align:center">保护的数据流</div></div>
<div class="r" style="left:349px;top:1074px;width:950px;height:149px;border:1px solid #c8d2ea;border-bottom:none"></div>
<svg class="r" style="left:354px;top:1079px;" width="20" height="20" viewBox="0 0 20 20"><circle cx="10" cy="10" r="8" fill="none" stroke="#4a90e2" stroke-width="1.7"/><path d="M10,5.5 V14.5 M5.5,10 H14.5" stroke="#4a90e2" stroke-width="1.8"/></svg>
<div class="t" style="left:379px;top:1080px;font-size:15px;line-height:18px;color:#333;font-weight:normal;">新建</div>
<div class="r" style="left:421px;top:1081px;width:1px;height:17px;background:#e3e3e3"></div>
<svg class="r" style="left:429px;top:1080px;" width="20" height="20" viewBox="0 0 20 20"><path d="M3,3 L17,17 M17,3 L3,17" stroke="#a5c6ef" stroke-width="2.8"/></svg>
<div class="t" style="left:454px;top:1080px;font-size:15px;line-height:18px;color:#aaa;font-weight:normal;">删除</div>
<div class="r" style="left:496px;top:1081px;width:1px;height:17px;background:#e3e3e3"></div>
<svg class="r" style="left:503px;top:1079px;" width="22" height="20" viewBox="0 0 22 20"><path d="M17,6.5 A7.5,7.5 0 0 0 4,7.5 M4,13.5 A7.5,7.5 0 0 0 17,12.5" fill="none" stroke="#4a90e2" stroke-width="2"/><path d="M15,2.5 L19.5,7.5 L13.5,8 Z M6,17.5 L1.5,12.5 L7.5,12 Z" fill="#4a90e2"/></svg>
<div class="t" style="left:529px;top:1080px;font-size:15px;line-height:18px;color:#333;font-weight:normal;">刷新</div>
<div class="r" style="left:350px;top:1103px;width:948px;height:34px;background:#e3e9f1;border-top:1px solid #c3c7cf;border-bottom:1px solid #c6d3ea"></div>
<div class="r" style="left:358px;top:1111px;width:17px;height:17px;background:#fff;border:1px solid #d9d9d9"></div>
<div class="t" style="left:387px;top:1110px;font-size:15px;line-height:18px;color:#444;font-weight:normal;">源IP地址</div>
<div class="t" style="left:552px;top:1110px;font-size:15px;line-height:18px;color:#444;font-weight:normal;">目的IP地址</div>
<div class="t" style="left:715px;top:1110px;font-size:15px;line-height:18px;color:#444;font-weight:normal;">VRF</div>
<div class="t" style="left:838px;top:1110px;font-size:15px;line-height:18px;color:#444;font-weight:normal;">协议</div>
<div class="t" style="left:919px;top:1110px;font-size:15px;line-height:18px;color:#444;font-weight:normal;">源端口</div>
<div class="t" style="left:1042px;top:1110px;font-size:15px;line-height:18px;color:#444;font-weight:normal;">目的端口</div>
<div class="t" style="left:1162px;top:1110px;font-size:15px;line-height:18px;color:#444;font-weight:normal;">动作</div>
<div class="t" style="left:1243px;top:1110px;font-size:15px;line-height:18px;color:#444;font-weight:normal;">编辑</div>
<div class="r" style="left:350px;top:1177px;width:948px;height:1px;background:#e2e2e2"></div>
<div class="r" style="left:543px;top:1137px;width:1px;height:40px;background:#e2e2e2"></div>
<div class="r" style="left:707px;top:1137px;width:1px;height:40px;background:#e2e2e2"></div>
<div class="r" style="left:830px;top:1137px;width:1px;height:40px;background:#e2e2e2"></div>
<div class="r" style="left:911px;top:1137px;width:1px;height:40px;background:#e2e2e2"></div>
<div class="r" style="left:1032px;top:1137px;width:1px;height:40px;background:#e2e2e2"></div>
<div class="r" style="left:1153px;top:1137px;width:1px;height:40px;background:#e2e2e2"></div>
<div class="r" style="left:1234px;top:1137px;width:1px;height:40px;background:#e2e2e2"></div>
<div class="r" style="left:358px;top:1148px;width:17px;height:17px;background:#fff;border:1px solid #d9d9d9"></div>
<div class="t" style="left:400px;top:1148px;font-size:15.5px;line-height:18px;color:#444;font-weight:normal;">192.168.11.0/255...</div>
<div class="t" style="left:564px;top:1148px;font-size:15.5px;line-height:18px;color:#444;font-weight:normal;">192.168.98.0/255...</div>
<div class="t" style="left:727px;top:1148px;font-size:15.5px;line-height:18px;color:#444;font-weight:normal;">公网</div>
<div class="t" style="left:850px;top:1148px;font-size:15.5px;line-height:18px;color:#444;font-weight:normal;">any</div>
<div class="t" style="left:931px;top:1148px;font-size:15.5px;line-height:18px;color:#444;font-weight:normal;">any</div>
<div class="t" style="left:1052px;top:1148px;font-size:15.5px;line-height:18px;color:#444;font-weight:normal;">any</div>
<div class="t" style="left:1174px;top:1148px;font-size:15.5px;line-height:18px;color:#444;font-weight:normal;">保护</div>
<svg class="r" style="left:1254px;top:1144px;" width="26" height="26" viewBox="0 0 26 26"><circle cx="13" cy="13" r="11.3" fill="#f5f6fb" stroke="#dfe2ee" stroke-width="1.5"/><path d="M7.5,18.5 L8.3,14.5 L15,7.8 L19.2,12 L12.5,18.7 Z" fill="#9ea8c9"/><path d="M14,9 L18,13" stroke="#c9cfe3" stroke-width="0.9"/><circle cx="9.8" cy="16.3" r="0.9" fill="#fff"/></svg>
</body></html>
